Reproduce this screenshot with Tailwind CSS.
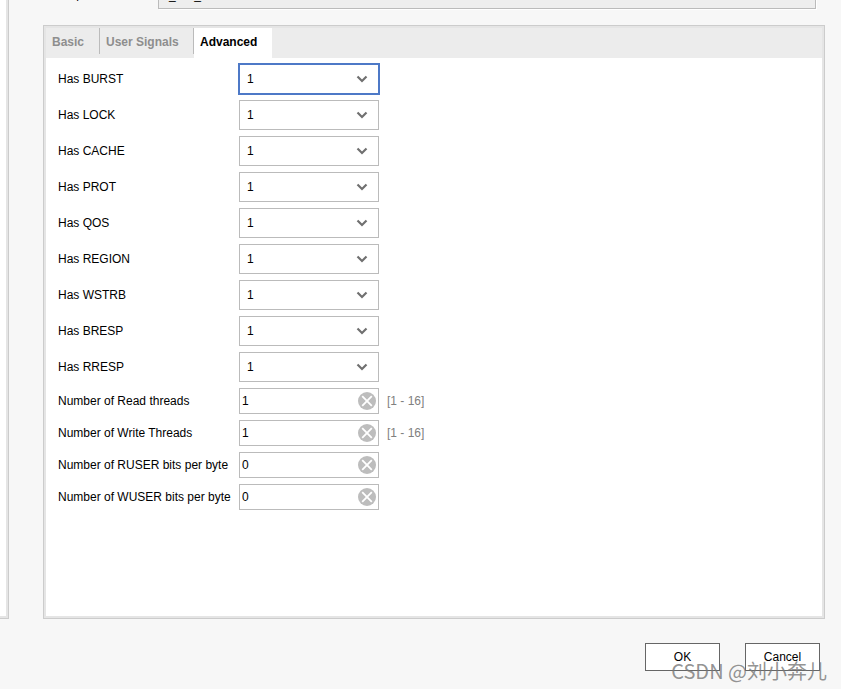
<!DOCTYPE html>
<html lang="en">
<head>
<meta charset="utf-8">
<title>Re-customize IP</title>
<script src="https://cdn.jsdelivr.net/npm/@tailwindcss/browser@4"></script>
</head>
<body class="bg-[#f7f7f7] text-black text-xs font-['Liberation_Sans','Noto_Sans_CJK_SC',sans-serif]">
<div class="relative flex min-h-screen flex-col overflow-hidden">
  <div class="flex flex-1">
    <aside class="w-[9px] shrink-0 border-r border-b border-[#ccc] bg-white"><div class="h-full border-r-2 border-b-2 border-[#e5e5e5]"></div></aside>
    <main class="flex flex-1 flex-col pr-4 pl-[34px]">
      <div class="flex h-[9px] items-end pr-[9px] pl-2">
        <label for="name" class="w-[107px] shrink-0 pb-[7px]">Component Name</label>
        <input id="name" readonly value="s_sim_0" class="h-7 flex-1 border border-[#bbb] bg-[#eee] px-1 pb-px shadow-[1px_1px_0_#fff] outline-none">
      </div>
      <section class="mt-4 flex flex-1 flex-col border border-[#ccc]">
        <div class="flex flex-1 flex-col border-2 border-[#e5e5e5] bg-white">
          <nav class="flex h-[30px] bg-[#ececec] font-bold text-[#8e8e8e]" role="tablist">
            <button role="tab" class="mb-1 w-[54px] border-r border-[#bbb] pt-0.5 pl-1.5 text-left">Basic</button>
            <button role="tab" class="mb-1 w-[94px] border-r border-[#bbb] pt-0.5 pl-1.5 text-left">User Signals</button>
            <button role="tab" aria-selected="true" class="w-[78px] bg-white pb-0.5 pl-1.5 text-left text-black">Advanced</button>
          </nav>
          <form id="rows" class="pt-[3px] pl-3"></form>
        </div>
      </section>
    </main>
  </div>
  <footer class="flex h-[70px] items-start justify-end gap-[25px] pt-6 pr-[21px]">
    <button class="h-7 w-[75px] border border-[#666] bg-white">OK</button>
    <button class="h-7 w-[75px] border border-[#666] bg-white">Cancel</button>
  </footer>
  <p class="pointer-events-none absolute right-[14px] bottom-1 text-xl leading-7 text-[#777]/80 font-['Noto_Sans_CJK_SC',sans-serif]">CSDN @刘小奔儿</p>
</div>
<script>
const rows = document.getElementById('rows');
['BURST','LOCK','CACHE','PROT','QOS','REGION','WSTRB','BRESP','RRESP'].forEach((n, i) => {
  const focus = i === 0;
  rows.insertAdjacentHTML('beforeend', `<div class="flex h-9 items-center">
    <label for="${n}" class="w-[181px] shrink-0">Has ${n}</label>
    <div class="relative flex">
      <select id="${n}" class="${focus ? 'h-8 w-[142px] -mx-px border-2 border-[#4d79c7] pl-[7px]' : 'h-[30px] w-[140px] border border-[#bbb] pl-[7px]'} appearance-none bg-white outline-none"><option>1</option><option>0</option></select>
      <svg class="pointer-events-none absolute top-1/2 right-[11px] -mt-1 h-2 w-3" viewBox="0 0 12 8" fill="none" stroke="#707070" stroke-width="2.2"><path d="M1.5 1.5 L6 6 L10.5 1.5"/></svg>
    </div></div>`);
});
[['Read threads',1,1],['Write Threads',1,1],['RUSER bits per byte',0,0],['WUSER bits per byte',0,0]].forEach(([n, v, range], i) => {
  rows.insertAdjacentHTML('beforeend', `<div class="flex h-8 items-center">
    <label for="n${i}" class="w-[181px] shrink-0 whitespace-nowrap">Number of ${n}</label>
    <div class="relative flex">
      <input id="n${i}" value="${v}" class="h-[26px] w-[140px] border border-[#bbb] bg-white pl-0.5 outline-none">
      <button type="button" aria-label="Clear" class="absolute top-1 right-[3px]"><svg class="size-[18px]" viewBox="0 0 18 18"><circle cx="9" cy="9" r="9" fill="#bdbdbd"/><path d="M4.2 4.2 L13.8 13.8 M13.8 4.2 L4.2 13.8" stroke="#fff" stroke-width="1.8"/></svg></button>
    </div>
    ${range ? '<span class="pl-2 text-[#808080]">[1 - 16]</span>' : ''}</div>`);
});
</script>
</body>
</html>
